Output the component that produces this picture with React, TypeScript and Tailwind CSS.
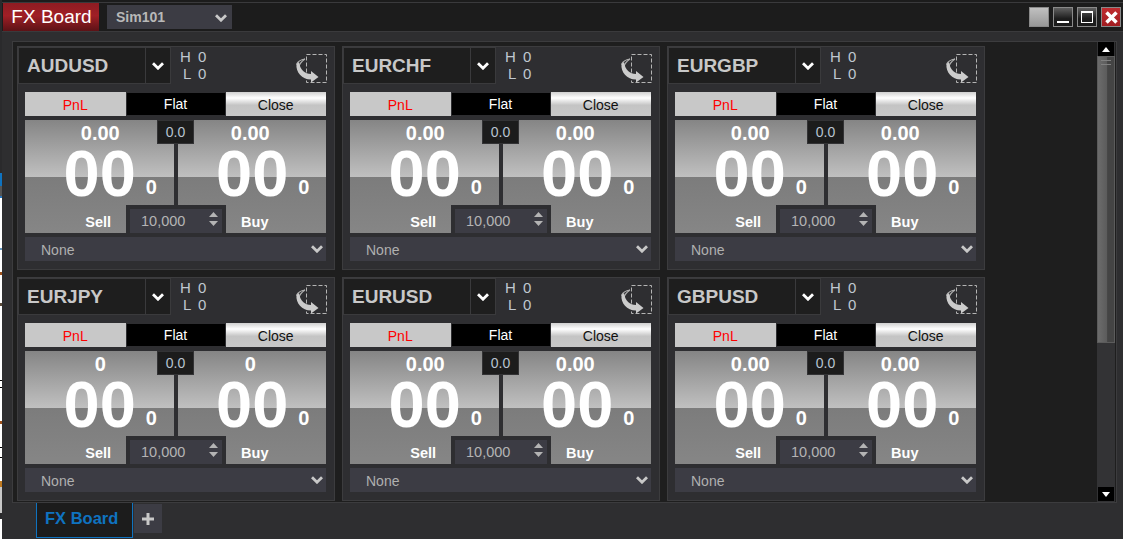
import React from "react";

const sans = "font-['Liberation_Sans',Arial,sans-serif]";

type Pair = { symbol: string; price: string };

const pairs: Pair[] = [
  { symbol: "AUDUSD", price: "0.00" },
  { symbol: "EURCHF", price: "0.00" },
  { symbol: "EURGBP", price: "0.00" },
  { symbol: "EURJPY", price: "0" },
  { symbol: "EURUSD", price: "0.00" },
  { symbol: "GBPUSD", price: "0.00" },
];

// bits of the desktop showing through at the window's left edge
const edgeMarks: { h: number; color: string }[] = [
  { h: 173, color: "bg-[#2a2a2c]" },
  { h: 13, color: "bg-[#0f73c0]" },
  { h: 10, color: "bg-[#555555]" },
  { h: 2, color: "bg-[#2a78c0]" },
  { h: 50, color: "bg-white" },
  { h: 2, color: "bg-[#6a9ac0]" },
  { h: 22, color: "bg-white" },
  { h: 3, color: "bg-[#a0521c]" },
  { h: 28, color: "bg-white" },
  { h: 3, color: "bg-[#5a4a3a]" },
  { h: 74, color: "bg-white" },
  { h: 1, color: "bg-black" },
  { h: 6, color: "bg-white" },
  { h: 1, color: "bg-black" },
  { h: 33, color: "bg-white" },
  { h: 3, color: "bg-[#a0521c]" },
  { h: 23, color: "bg-white" },
  { h: 1, color: "bg-black" },
  { h: 9, color: "bg-white" },
  { h: 1, color: "bg-black" },
  { h: 23, color: "bg-white" },
  { h: 6, color: "bg-[#c07a20]" },
  { h: 26, color: "bg-[#c8c8c8]" },
  { h: 6, color: "bg-[#2a2a2c]" },
];

function Chevron({ className }: { className?: string }) {
  return (
    <svg viewBox="0 0 12 8" className={className} fill="none" stroke="currentColor" strokeWidth="2.800">
      <path d="M1 1.200 6 6.200 11 1.200" />
    </svg>
  );
}

function ReverseIcon() {
  return (
    <svg width="32" height="31" viewBox="0 0 32 31" className="shrink-0">
      <rect x="11.500" y="1.500" width="20" height="28" fill="none" stroke="#b4b4b4" strokeDasharray="4 2" />
      <path d="M10 6C6 6.500 3 8 1.500 11.500M10 6C7 8 4.500 10 4 14" fill="none" stroke="#b0b0b0" strokeWidth="1.200" />
      <path d="M1.500 11C.500 19 7 26.500 16 26.500V29.500L23.500 24 16 18V21C10 21 5 17 4 9Z" fill="#cccccc" />
    </svg>
  );
}

function Side({ label, price, right }: { label: string; price: string; right?: boolean }) {
  return (
    <div className="flex h-full flex-1 flex-col items-center bg-[linear-gradient(#858585_0,#c0c0c0_50.4%,#7c7c7c_50.4%,#868686_100%)] text-white">
      <div className={`mt-[1px] h-[24px] text-[20px] font-bold leading-[24px] ${right ? "mr-[3px]" : "ml-[2px]"}`}>{price}</div>
      <div className="-mt-[1px] ml-[22px] flex h-[60px] items-end">
        <span className="text-[65px] font-bold leading-[60px]">00</span>
        <span className="mb-[7px] ml-[10px] text-[20px] font-bold leading-[20px]">0</span>
      </div>
      <div className={`mt-[9px] text-[14.500px] font-bold leading-[18px] ${right ? "ml-[6px]" : "mr-[2px]"}`}>{label}</div>
    </div>
  );
}

function Card({ pair }: { pair: Pair }) {
  return (
    <div className="h-[224px] w-[318px] border border-[#3c3c3e] bg-[#2e2e31]">
      <div className="flex h-[37px]">
        <div className="flex h-[37px] w-[128px] items-center border border-[#3a3a3c] bg-[#1e1e1e] pl-[8px] pt-[2px] text-[19px] font-bold text-[#c8c8c8]">
          {pair.symbol}
        </div>
        <div className="flex h-[37px] w-[25px] items-center justify-center border border-l-0 border-[#3a3a3c] bg-[#1e1e1e] text-white">
          <Chevron className="h-[8px] w-[12px]" />
        </div>
        <div className="ml-[9px] flex flex-col pt-[1px] text-[15px] leading-[17px] text-[#c0c8d0]">
          <div className="flex gap-[7px]">
            <span className="w-[11px]">H</span>
            <span>0</span>
          </div>
          <div className="flex gap-[7px]">
            <span className="w-[11px] pl-[3px]">L</span>
            <span>0</span>
          </div>
        </div>
        <div className="ml-auto mr-[7px] mt-[6px]">
          <ReverseIcon />
        </div>
      </div>

      <div className="ml-[7px] mr-[8px] mt-[8px] flex h-[24px] text-[14px] leading-[24px]">
        <div className="flex-1 bg-[#c8c8c8] pt-[1px] text-center text-[#ff0000]">PnL</div>
        <div className="w-[100px] border border-[#2e2e31] bg-black text-center leading-[23px] text-white">Flat</div>
        <div className="flex-1 bg-[linear-gradient(#d0d0d0_0,#ffffff_25%,#c4c4c4_55%,#c8c8c8_100%)] pt-[1px] text-center text-[#111111]">Close</div>
      </div>

      <div className="relative ml-[7px] mr-[8px] mt-[4px] flex h-[113px] gap-[4px] bg-[#2e2e31]">
        <Side label="Sell" price={pair.price} />
        <Side label="Buy" price={pair.price} right />
        <div className="absolute left-[132px] top-0 flex h-[24px] w-[37px] items-center justify-center border border-[#333335] bg-[#1c1c1c] text-[14px] text-[#b8c4d0]">
          0.0
        </div>
        <div className="absolute bottom-0 left-[101px] flex h-[28px] w-[100px] items-center border-[4px] border-b-0 border-[#2e2e31] bg-[#3c3c44] pl-[11px] pt-[2px] text-[14.500px] text-[#b4b4b4]">
          10,000
          <div className="absolute right-[4px] top-[3px] flex flex-col gap-[3px] text-[#b4b4b4]">
            <svg width="9" height="6" viewBox="0 0 9 6"><path d="M4.500 0 9 5H0Z" fill="currentColor" /></svg>
            <svg width="9" height="6" viewBox="0 0 9 6"><path d="M0 0H9L4.500 5Z" fill="currentColor" /></svg>
          </div>
        </div>
      </div>

      <div className="ml-[7px] mr-[8px] mt-[4px] flex h-[24px] items-center justify-between bg-[#3c3c44] pl-[16px] pr-[3px] text-[14px] text-[#b0b0b0]">
        <span className="pt-[2px]">None</span>
        <Chevron className="h-[8px] w-[12px] text-[#c8c8c8]" />
      </div>
    </div>
  );
}

function WinButton({ children, className }: { children?: React.ReactNode; className: string }) {
  return (
    <div className={`flex h-[20px] w-[20px] justify-center border border-[#8a8a8a] ${className}`}>
      {children}
    </div>
  );
}

function ScrollBar() {
  return (
    <div className="flex w-[18px] flex-col bg-[#333335] pb-[1px]">
      <div className="mx-[1px] flex h-[14px] items-center justify-center bg-black">
        <svg width="8" height="5" viewBox="0 0 8 5"><path d="M4 0 8 5H0Z" fill="#ffffff" /></svg>
      </div>
      <div className="h-[287px] border border-[#5c5c5c] bg-[linear-gradient(90deg,#6c6c6c,#5c5c5c_55%,#444444_60%,#444444)] pt-[3px]">
        <div className="mx-[3px] h-[1px] bg-[#808080]" />
        <div className="mx-[3px] mt-[3px] h-[1px] bg-[#808080]" />
      </div>
      <div className="flex-1" />
      <div className="mx-[1px] flex h-[14px] items-center justify-center bg-black">
        <svg width="8" height="5" viewBox="0 0 8 5"><path d="M0 0H8L4 5Z" fill="#ffffff" /></svg>
      </div>
    </div>
  );
}

export default function App() {
  return (
    <div className={`flex h-[539px] w-[1123px] overflow-hidden ${sans}`}>
      <div className="flex w-[2px] shrink-0 flex-col">
        {edgeMarks.map((m, i) => (
          <div key={i} className={m.color} style={{ height: m.h }} />
        ))}
      </div>

      <div className="h-[539px] flex-1 bg-[#2e2e30]">
        <div className="flex h-[32px] flex-col border-b border-[#3a3a3c] bg-[#1c1c1c]">
          <div className="h-[3px] shrink-0 border-b border-[#3a3a3c]" />
          <div className="flex items-start pl-[1px] pr-[2px]">
            <div className="flex h-[28px] w-[96px] items-center justify-center bg-[linear-gradient(#8e1c22,#a01f26_45%,#5c1216)] pl-[1px] text-[19px] text-white">
              FX Board
            </div>
            <div className="ml-[8px] mt-[2px] flex h-[24px] w-[125px] items-center justify-between bg-[#3c3c44] pl-[9px] pr-[5px] pt-[1px] text-[14px] font-bold text-[#b8b8b8]">
              Sim101
              <Chevron className="h-[8px] w-[12px] text-[#c8c8c8]" />
            </div>
            <div className="ml-auto mt-[4px] flex gap-[4px]">
              <WinButton className="bg-[linear-gradient(#c0c0c0,#989898)]" />
              <WinButton className="items-end bg-[linear-gradient(#606060,#1c1c1c_60%)] pb-[3px]">
                <div className="h-[2px] w-[12px] bg-white" />
              </WinButton>
              <WinButton className="items-center bg-[linear-gradient(#606060,#1c1c1c_60%)]">
                <div className="h-[12px] w-[12px] border border-t-[2px] border-white" />
              </WinButton>
              <WinButton className="items-center bg-[linear-gradient(#c02c30,#a01c20)]">
                <svg width="13" height="13" viewBox="0 0 13 13"><path d="M1.500 1.500 11.500 11.500M11.500 1.500 1.500 11.500" stroke="#ffffff" strokeWidth="3.500" /></svg>
              </WinButton>
            </div>
          </div>
        </div>

        <div className="ml-[10px] mt-[9px] flex h-[462px] w-[1105px] justify-between border border-[#3c3c3e] bg-[#1e1e1e] pl-[4px] pr-[1px]">
          <div className="grid grid-cols-[318px_318px_318px] content-start gap-x-[7px] gap-y-[7px] pt-[4px]">
            {pairs.map(p => (
              <Card key={p.symbol} pair={p} />
            ))}
          </div>
          <ScrollBar />
        </div>

        <div className="ml-[34px] flex items-start">
          <div className="flex h-[35px] w-[97px] items-center border border-t-0 border-[#0f73c0] bg-[#1c1c1c] pb-[3px] pl-[8px] text-[16.500px] font-bold text-[#0f73c0]">
            FX Board
          </div>
          <div className="ml-[1px] mt-[1px] flex h-[29px] w-[28px] items-center justify-center bg-[#3c3c44]">
            <svg width="14" height="14" viewBox="0 0 14 14"><path d="M7 1V13M1 7H13" stroke="#c8c8c8" strokeWidth="3" /></svg>
          </div>
        </div>
      </div>
    </div>
  );
}
